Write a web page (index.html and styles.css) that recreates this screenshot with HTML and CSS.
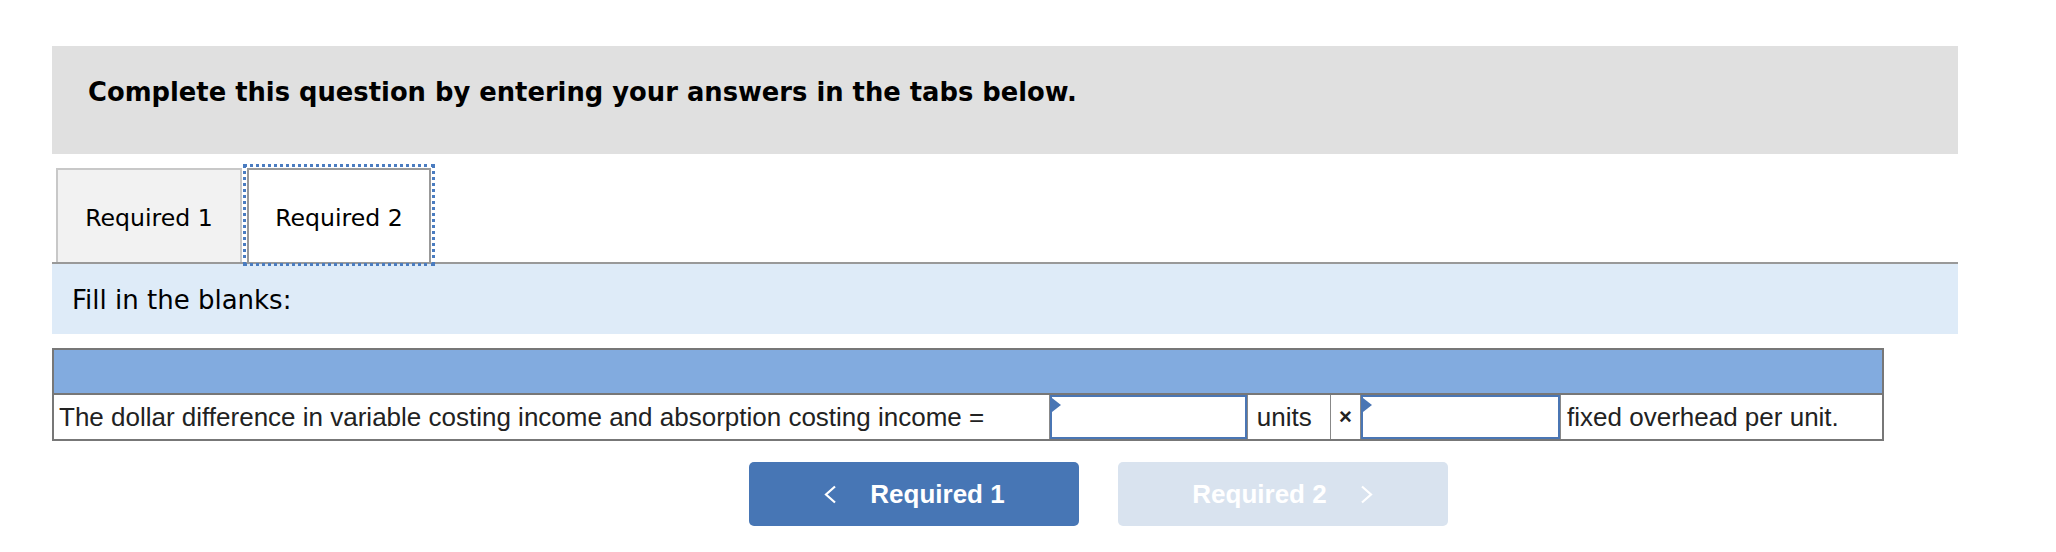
FILE: index.html
```html
<!DOCTYPE html>
<html lang="en">
<head>
    <meta charset="UTF-8">
    <meta name="viewport" content="width=device-width, initial-scale=1.0">
    <title>Required 2</title>
    <link rel="stylesheet" href="styles.css">
</head>
<body>
    <div id="question">
        <div class="prompt">Complete this question by entering your answers in the tabs below.</div>

        <div class="tabs">
            <button class="tab">Required 1</button>
            <button class="tab tab-active">Required 2</button>
        </div>

        <div class="instructions">Fill in the blanks:</div>

        <table class="answer-table">
            <colgroup>
                <col class="col-label">
                <col class="col-input">
                <col class="col-units">
                <col class="col-times">
                <col class="col-input2">
                <col class="col-rest">
            </colgroup>
            <tr class="head-row"><td colspan="6"></td></tr>
            <tr class="answer-row">
                <td class="label">The dollar difference in variable costing income and absorption costing income =</td>
                <td class="input-cell"><div class="input-wrap"><span class="flag"></span><input type="text"></div></td>
                <td class="units">units</td>
                <td class="times">×</td>
                <td class="input-cell"><div class="input-wrap"><span class="flag"></span><input type="text"></div></td>
                <td class="label">fixed overhead per unit.</td>
            </tr>
        </table>

        <div class="nav">
            <button class="nav-btn prev">
                <svg width="14" height="19" viewBox="0 0 14 19"><path d="M12 1.5 L3 9.5 L12 17.5" fill="none" stroke="#fff" stroke-width="2.2"/></svg>
                <span>Required 1</span>
            </button>
            <button class="nav-btn next" disabled>
                <span>Required 2</span>
                <svg width="14" height="19" viewBox="0 0 14 19"><path d="M2 1.5 L11 9.5 L2 17.5" fill="none" stroke="#fff" stroke-width="2.2"/></svg>
            </button>
        </div>
    </div>
</body>
</html>
```

FILE: styles.css
```css
body {
    margin: 0;
    font-family: "DejaVu Sans", Verdana, sans-serif;
    background-color: #fff;
    color: #000;
}
#question {
    width: 1906px;
    padding: 46px 0 0 52px;
}
.prompt {
    height: 108px;
    box-sizing: border-box;
    padding: 31px 36px 0;
    background-color: #e0e0e0;
    font-size: 25.8px;
    font-weight: bold;
    line-height: 30px;
}
.tabs {
    display: flex;
    gap: 5px;
    margin-top: 14px;
    padding-left: 4px;
}
.tab {
    width: 186px;
    height: 94px;
    box-sizing: border-box;
    padding: 4px 0 0;
    border: 2px solid #c8c8c8;
    border-bottom: none;
    background-color: #f2f2f2;
    font-family: "DejaVu Sans", Verdana, sans-serif;
    font-size: 23.6px;
    color: #000;
    cursor: pointer;
}
.tab-active {
    width: 184px;
    background-color: #fff;
    border-color: #999;
    outline: 3px dotted #4a7cc0;
    outline-offset: 1px;
}
.instructions {
    height: 72px;
    box-sizing: border-box;
    padding: 21px 20px 0;
    border-top: 2px solid #999;
    background-color: #deebf8;
    font-size: 26px;
    line-height: 30px;
}
.answer-table {
    width: 1832px;
    margin-top: 14px;
    border-collapse: collapse;
    table-layout: fixed;
    border: 2px solid #777;
    font-family: "Liberation Sans", Arial, sans-serif;
    font-size: 26px;
    color: #222;
}
.col-label { width: 995px; }
.col-input { width: 198px; }
.col-units { width: 83px; }
.col-times { width: 30px; }
.col-input2 { width: 200px; }
.col-rest { width: 322px; }
.head-row td {
    height: 43px;
    padding: 0;
    background-color: #82abdf;
    border-bottom: 2px solid #777;
}
.answer-row td {
    height: 44px;
    padding: 0 6px;
    border-left: 1px solid #888;
    white-space: nowrap;
}
.answer-row td:first-child {
    border-left: none;
    padding-left: 5px;
}
.answer-row .input-cell {
    padding: 0;
}
.answer-row .units {
    padding-left: 9px;
}
.answer-row .times {
    padding: 0;
    text-align: center;
    font-size: 22px;
    font-weight: bold;
}
.input-wrap {
    position: relative;
}
.input-wrap input {
    display: block;
    width: 100%;
    height: 44px;
    box-sizing: border-box;
    margin: 0;
    padding: 0 8px;
    border: 2px solid #4a76b4;
    font-family: "Liberation Sans", Arial, sans-serif;
    font-size: 26px;
}
.flag {
    position: absolute;
    top: 3px;
    left: 2px;
    width: 0;
    height: 0;
    border-top: 7px solid transparent;
    border-bottom: 7px solid transparent;
    border-left: 9px solid #4a76b4;
}
.nav {
    display: flex;
    gap: 39px;
    margin-top: 21px;
    padding-left: 697px;
}
.nav-btn {
    display: flex;
    align-items: center;
    justify-content: center;
    gap: 33px;
    width: 330px;
    height: 64px;
    padding: 0;
    border: none;
    border-radius: 5px;
    font-family: "Liberation Sans", Arial, sans-serif;
    font-size: 26px;
    font-weight: bold;
    color: #fff;
    cursor: pointer;
}
.prev {
    background-color: #4776b5;
}
.next {
    background-color: #d9e3ef;
    cursor: default;
}
```
